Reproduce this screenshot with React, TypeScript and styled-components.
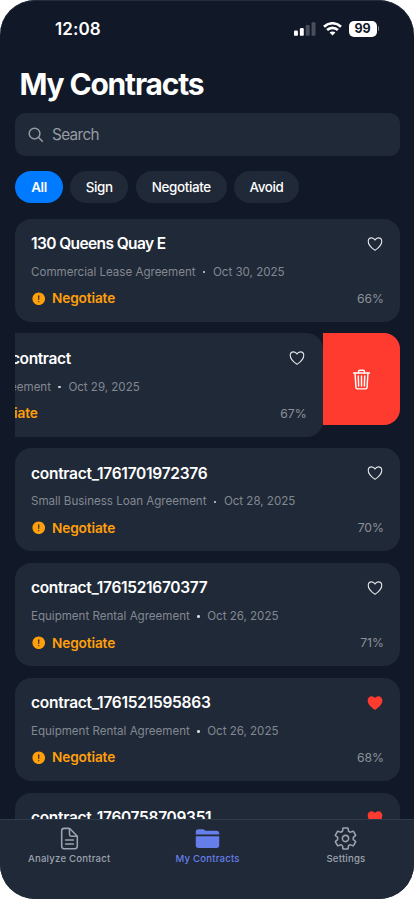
import React from 'react';
import styled, { createGlobalStyle, css } from 'styled-components';
import {
  IoAlertCircle,
  IoDocumentTextOutline,
  IoFolder,
  IoHeart,
  IoHeartOutline,
  IoSearchOutline,
  IoSettingsOutline,
  IoTrashOutline,
} from 'react-icons/io5';

const GlobalStyle = createGlobalStyle`
  * { box-sizing: border-box; }
  html, body { margin: 0; background: #fff; }
  body { font-family: Inter, "Liberation Sans", sans-serif; }
  svg { display: block; flex: none; }
`;

const Screen = styled.main`
  width: 414px;
  height: 899px;
  display: flex;
  flex-direction: column;
  overflow: hidden;
  border-radius: 35px;
  background: #111827;
  color: #fff;
  box-shadow: inset 0 1px 0 #252c3a;
`;

const StatusBar = styled.div`
  height: 57px;
  flex: none;
  display: flex;
  align-items: center;
  justify-content: space-between;
  padding: 0 35px 0 55px;
`;

const Clock = styled.span`
  font-size: 17px;
  line-height: 20px;
  font-weight: 600;
  letter-spacing: 0.1px;
`;

const StatusIcons = styled.div`
  display: flex;
  align-items: center;
  gap: 7px;
`;

const Battery = styled.div`
  display: flex;
  align-items: center;
  gap: 1px;
`;

const BatteryLevel = styled.span`
  width: 28px;
  height: 16px;
  border-radius: 5px;
  background: #fff;
  color: #111827;
  font-size: 12.5px;
  line-height: 16px;
  font-weight: 700;
  text-align: center;
`;

const BatteryTip = styled.span`
  width: 1.5px;
  height: 5px;
  border-radius: 0 2px 2px 0;
  background: #7c818b;
`;

const Heading = styled.h1`
  margin: 8px 0 0 19.5px;
  height: 38px;
  flex: none;
  font-size: 30px;
  line-height: 38px;
  font-weight: 700;
  letter-spacing: -1.18px;
`;

const SearchBox = styled.div`
  height: 43px;
  flex: none;
  margin: 10px 14px 0 15px;
  padding: 0 12px;
  display: flex;
  align-items: center;
  gap: 7.5px;
  border-radius: 10px;
  background: #202937;
  color: #979ba3;
  font-size: 15.3px;
  letter-spacing: -0.65px;

  svg path { stroke-width: 42px; }
  svg path:last-child { stroke-width: 46px; }
`;

const Filters = styled.div`
  display: flex;
  flex: none;
  gap: 7.5px;
  margin: 15px 0 0 15.3px;
`;

const Chip = styled.button<{ $width: number; $active?: boolean }>`
  width: ${({ $width }) => $width}px;
  height: 32px;
  padding: 0;
  border: 0;
  border-radius: 16px;
  background: ${({ $active }) => ($active ? '#007aff' : '#202937')};
  color: #fff;
  font-family: inherit;
  font-size: 13.4px;
  font-weight: ${({ $active }) => ($active ? 600 : 500)};
  letter-spacing: -0.35px;
`;

const List = styled.section`
  flex: 1;
  min-height: 0;
  overflow: hidden;
  display: flex;
  flex-direction: column;
  gap: 11.6px;
  padding: 15.6px 14px 0 15px;
`;

const SwipeRow = styled.div`
  height: 103.2px;
  flex: none;
  display: flex;
  align-items: flex-start;
  justify-content: flex-end;
  overflow: hidden;
`;

const Card = styled.article`
  width: 385px;
  height: 103.2px;
  flex: none;
  padding: 15.4px 16px 0;
  border-radius: 16px;
  background: #202937;
`;

const DeleteAction = styled.button`
  width: 77.4px;
  height: 92px;
  flex: none;
  display: flex;
  align-items: center;
  justify-content: center;
  padding: 0;
  border: 0;
  border-radius: 0 16px 16px 0;
  background: #ff3b30;
  color: #fff;
`;

const CardLine = styled.div`
  display: flex;
  align-items: center;
  justify-content: space-between;
`;

const CardTitle = styled.h2<{ $spacing: number }>`
  margin: 0;
  font-size: 15.5px;
  line-height: 19px;
  font-weight: 600;
  letter-spacing: ${({ $spacing }) => $spacing}px;
`;

const HeartSlot = styled.span`
  margin-right: 0.2px;
  margin-top: 0.4px;
`;

const Meta = styled.div`
  display: flex;
  align-items: center;
  margin-top: 10.8px;
  color: #828892;
  font-size: 11.6px;
  line-height: 16px;
  letter-spacing: -0.02px;
`;

const Dot = styled.span`
  width: 2.4px;
  height: 2.4px;
  margin: 1px 7.5px 0;
  border-radius: 50%;
  background: #d3d6db;
`;

const VerdictLine = styled(CardLine)`
  margin-top: 9px;
  height: 19px;
`;

const Verdict = styled.span`
  display: flex;
  align-items: center;
  gap: 5.5px;
  color: #ff9f0a;
  font-size: 13.7px;
  font-weight: 600;
  letter-spacing: -0.15px;
`;

const Score = styled.span`
  color: #8c9199;
  font-size: 12.2px;
`;

const TabBar = styled.nav`
  height: 80px;
  flex: none;
  display: grid;
  grid-template-columns: repeat(3, 138.4px);
  border-top: 1px solid #313a48;
  background: #202937;
`;

const Tab = styled.a<{ $active?: boolean }>`
  display: flex;
  flex-direction: column;
  align-items: center;
  padding-top: 6px;
  font-size: 9.6px;
  line-height: 14px;
  font-weight: 500;
  letter-spacing: 0.2px;
  color: #9ca3af;
  ${({ $active }) =>
    $active &&
    css`
      color: #667eea;
    `}
`;

const TabLabel = styled.span`
  margin-top: 0.5px;
`;

type Contract = {
  name: string;
  kind: string;
  date: string;
  score: string;
  liked?: boolean;
  swiped?: boolean;
  spacing?: number;
};

const contracts: Contract[] = [
  { name: '130 Queens Quay E', kind: 'Commercial Lease Agreement', date: 'Oct 30, 2025', score: '66%', spacing: -0.6 },
  { name: 'vendor_contract', kind: 'Rental Agreement', date: 'Oct 29, 2025', score: '67%', swiped: true, spacing: -0.38 },
  { name: 'contract_1761701972376', kind: 'Small Business Loan Agreement', date: 'Oct 28, 2025', score: '70%', spacing: -0.27 },
  { name: 'contract_1761521670377', kind: 'Equipment Rental Agreement', date: 'Oct 26, 2025', score: '71%' },
  { name: 'contract_1761521595863', kind: 'Equipment Rental Agreement', date: 'Oct 26, 2025', score: '68%', liked: true, spacing: -0.26 },
  { name: 'contract_1760758709351', kind: 'Equipment Rental Agreement', date: 'Oct 18, 2025', score: '69%', liked: true },
];

function ContractCard({ item }: { item: Contract }) {
  return (
    <Card>
      <CardLine>
        <CardTitle $spacing={item.spacing ?? -0.3}>{item.name}</CardTitle>
        <HeartSlot>
          {item.liked ? <IoHeart size={18} color="#ff3b30" /> : <IoHeartOutline size={18} color="#e2e5e9" />}
        </HeartSlot>
      </CardLine>
      <Meta>
        <span>{item.kind}</span>
        <Dot />
        <span>{item.date}</span>
      </Meta>
      <VerdictLine>
        <Verdict>
          <IoAlertCircle size={15.5} />
          Negotiate
        </Verdict>
        <Score>{item.score}</Score>
      </VerdictLine>
    </Card>
  );
}

function SignalIcon() {
  return (
    <svg width="21.5" height="14" viewBox="0 0 22 14" fill="#fff">
      <rect x="0" y="8.5" width="4" height="5.5" rx="1.2" />
      <rect x="6" y="6" width="4" height="8" rx="1.2" />
      <rect x="12" y="3" width="4" height="11" rx="1.2" opacity="0.24" />
      <rect x="18" y="0" width="4" height="14" rx="1.2" opacity="0.24" />
    </svg>
  );
}

function WifiIcon() {
  return (
    <svg width="19" height="14" viewBox="0 0 19 14" fill="none" stroke="#fff" strokeWidth="2.6">
      <path d="M1 4.7C5.7 0.1 13.3 0.1 18 4.7" />
      <path d="M4.1 8C7.1 5.1 11.9 5.1 14.9 8" />
      <path d="M6.6 10.5C8.2 9 10.8 9 12.4 10.5L9.5 13.5Z" fill="#fff" stroke="none" />
    </svg>
  );
}

export default function App() {
  return (
    <>
      <GlobalStyle />
      <Screen>
        <StatusBar>
          <Clock>12:08</Clock>
          <StatusIcons>
            <SignalIcon />
            <WifiIcon />
            <Battery>
              <BatteryLevel>99</BatteryLevel>
              <BatteryTip />
            </Battery>
          </StatusIcons>
        </StatusBar>
        <Heading>My Contracts</Heading>
        <SearchBox>
          <IoSearchOutline size={17.5} />
          <span>Search</span>
        </SearchBox>
        <Filters>
          <Chip $width={47.5} $active>All</Chip>
          <Chip $width={58}>Sign</Chip>
          <Chip $width={91}>Negotiate</Chip>
          <Chip $width={64.5}>Avoid</Chip>
        </Filters>
        <List>
          {contracts.map((item) =>
            item.swiped ? (
              <SwipeRow key={item.name}>
                <ContractCard item={item} />
                <DeleteAction aria-label="Delete">
                  <IoTrashOutline size={23} />
                </DeleteAction>
              </SwipeRow>
            ) : (
              <ContractCard key={item.name} item={item} />
            ),
          )}
        </List>
        <TabBar>
          <Tab>
            <IoDocumentTextOutline size={25} />
            <TabLabel>Analyze Contract</TabLabel>
          </Tab>
          <Tab $active>
            <IoFolder size={25} />
            <TabLabel>My Contracts</TabLabel>
          </Tab>
          <Tab>
            <IoSettingsOutline size={25} />
            <TabLabel>Settings</TabLabel>
          </Tab>
        </TabBar>
      </Screen>
    </>
  );
}
